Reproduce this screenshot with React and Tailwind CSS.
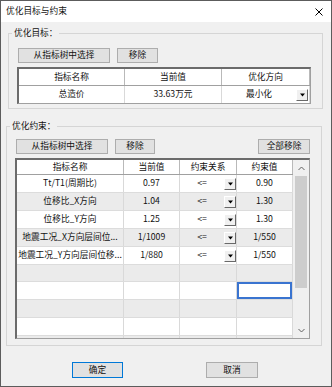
import React from 'react';

const rows = [
  { name: 'Tt/T1(周期比)', cur: '0.97', rel: '<=', val: '0.90' },
  { name: '位移比_X方向', cur: '1.04', rel: '<=', val: '1.30' },
  { name: '位移比_Y方向', cur: '1.25', rel: '<=', val: '1.30' },
  { name: '地震工况_X方向层间位...', cur: '1/1009', rel: '<=', val: '1/550' },
  { name: '地震工况_Y方向层间位移...', cur: '1/880', rel: '<=', val: '1/550' },
  {},
  { selected: true },
  {},
  {},
  {},
];

function Btn({ className = '', children }) {
  return (
    <div className={`flex h-[15px] items-center justify-center border border-[#adadad] bg-[#e1e1e1] ${className}`}>
      {children}
    </div>
  );
}

function DropBtn({ className = '' }) {
  return (
    <span className={`flex h-[12px] w-[12px] shrink-0 items-center justify-center border border-t-white border-l-white border-r-[#696969] border-b-[#696969] bg-[#f0f0f0] ${className}`}>
      <svg width="5" height="4" viewBox="0 0 5 4">
        <path d="M0 0.5h5L2.5 3.5z" fill="#000" />
      </svg>
    </span>
  );
}

function Chevron({ up }) {
  return (
    <svg width="7" height="5" viewBox="0 0 7 5">
      <path d={up ? 'M0.5 4L3.5 1L6.5 4' : 'M0.5 1L3.5 4L6.5 1'} fill="none" stroke="#606060" strokeWidth="1" />
    </svg>
  );
}

export default function App() {
  return (
    <div className="flex h-[387px] w-[332px] flex-col border border-[#5c5c5c] bg-[#f0f0f0] font-['Noto_Sans_CJK_SC',sans-serif] text-[8.7px] leading-none text-[#111]">
      {/* title bar */}
      <div className="flex h-[21px] shrink-0 items-center justify-between bg-white pl-[5px] pr-[8px]">
        <span>优化目标与约束</span>
        <svg width="8" height="8" viewBox="0 0 8 8">
          <path d="M0.5 0.5L7.5 7.5M7.5 0.5L0.5 7.5" stroke="#000" strokeWidth="1" />
        </svg>
      </div>

      {/* 优化目标 */}
      <fieldset className="ml-[7px] mt-[5px] w-[315px] border border-[#d5d5d5]">
        <legend className="ml-[3px] px-[2px] leading-[12px]">优化目标：</legend>
        <div className="pb-[4px] pl-[8px] pt-[9px]">
          <div className="ml-[1px] flex gap-[7px]">
            <Btn className="w-[92px]">从指标树中选择</Btn>
            <Btn className="w-[41px]">移除</Btn>
          </div>
          <div className="mt-[4px] w-[294px] border-b border-l-2 border-r border-t-2 border-b-[#a0a0a0] border-l-[#6b6b6b] border-r-[#a0a0a0] border-t-[#6b6b6b] bg-white">
            <div className="flex h-[17px] border-b border-[#a0a0a0]">
              <div className="flex w-[106px] items-center justify-center border-r border-[#b9b9b9]">指标名称</div>
              <div className="flex w-[97px] items-center justify-center border-r border-[#b9b9b9]">当前值</div>
              <div className="flex flex-1 items-center justify-center border-r border-[#b9b9b9]">优化方向</div>
            </div>
            <div className="flex h-[17px]">
              <div className="flex w-[106px] items-center justify-center border-r border-[#d9d9d9]">总造价</div>
              <div className="flex w-[97px] items-center justify-center border-r border-[#d9d9d9]">33.63万元</div>
              <div className="flex flex-1 items-center border-r border-[#d9d9d9] pr-[1px]">
                <span className="flex-1 text-center">最小化</span>
                <DropBtn />
              </div>
            </div>
          </div>
        </div>
      </fieldset>

      {/* 优化约束 */}
      <fieldset className="ml-[5px] mt-[11px] w-[316px] border border-[#d5d5d5]">
        <legend className="ml-[3px] px-[2px] leading-[12px]">优化约束：</legend>
        <div className="pb-[6px] pl-[8px] pt-[7px]">
          <div className="flex w-[295px]">
            <Btn className="ml-[1px] w-[92px]">从指标树中选择</Btn>
            <Btn className="ml-[7px] w-[40px]">移除</Btn>
            <Btn className="ml-auto w-[52px]">全部移除</Btn>
          </div>
          <div className="mt-[4px] flex h-[181px] w-[295px] overflow-hidden border-b border-l-2 border-r border-t-2 border-b-[#a0a0a0] border-l-[#6b6b6b] border-r-[#a0a0a0] border-t-[#6b6b6b] bg-white">
            <div className="flex flex-1 flex-col">
              <div className="flex h-[15px] shrink-0 border-b border-[#a0a0a0]">
                <div className="flex w-[107px] items-center justify-center border-r border-[#b9b9b9]">指标名称</div>
                <div className="flex w-[56px] items-center justify-center border-r border-[#b9b9b9]">当前值</div>
                <div className="flex w-[57px] items-center justify-center border-r border-[#b9b9b9]">约束关系</div>
                <div className="flex w-[56px] items-center justify-center border-r border-[#b9b9b9]">约束值</div>
              </div>
              {rows.map((r, i) => (
                <div
                  key={i}
                  className={`flex shrink-0 border-b border-[#dcdcdc] ${i === 5 ? 'h-[17px]' : 'h-[18px]'} ${i % 2 ? 'bg-[#ebebeb]' : 'bg-white'}`}
                >
                  <div className="flex w-[107px] items-center justify-center overflow-hidden whitespace-nowrap border-r border-[#d9d9d9]">{r.name}</div>
                  <div className="flex w-[56px] items-center justify-center border-r border-[#d9d9d9]">{r.cur}</div>
                  <div className="flex w-[57px] items-center border-r border-[#d9d9d9]">
                    {r.rel && (
                      <>
                        <span className="flex-1 text-center">{r.rel}</span>
                        <DropBtn />
                      </>
                    )}
                  </div>
                  <div className="flex w-[56px] items-center justify-center border-r border-[#d9d9d9]">
                    {r.selected ? <div className="h-full w-full border-2 border-[#3a74d0] bg-white" /> : r.val}
                  </div>
                </div>
              ))}
            </div>
            {/* scrollbar */}
            <div className="flex w-[16px] shrink-0 flex-col bg-[#f0f0f0]">
              <div className="flex h-[16px] shrink-0 items-center justify-center">
                <Chevron up />
              </div>
              <div className="flex-1">
                <div className="mx-[2px] h-[112px] bg-[#cdcdcd]" />
              </div>
              <div className="flex h-[16px] shrink-0 items-center justify-center">
                <Chevron />
              </div>
            </div>
          </div>
        </div>
      </fieldset>

      {/* footer buttons */}
      <div className="ml-[71px] mt-[16px] flex">
        <div className="flex h-[16px] w-[51px] items-center justify-center border border-[#0078d7] bg-[#e1e1e1]">确定</div>
        <div className="ml-[83px] flex h-[16px] w-[52px] items-center justify-center border border-[#adadad] bg-[#e1e1e1]">取消</div>
      </div>
    </div>
  );
}
